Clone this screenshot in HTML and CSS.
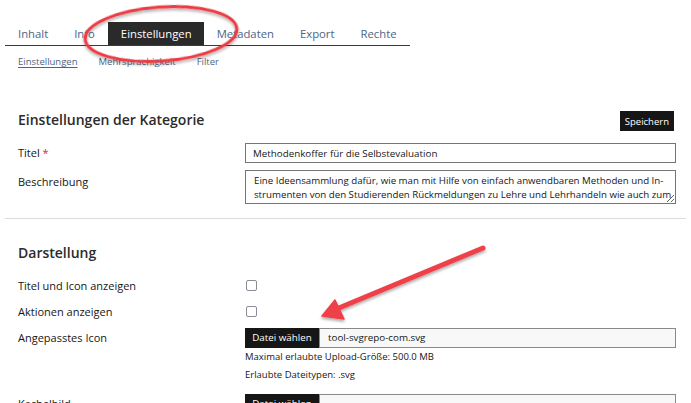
FILE: index.html
```html
<!DOCTYPE html>
<html lang="de">
<head>
<meta charset="utf-8">
<title>Einstellungen</title>
<link rel="stylesheet" href="styles.css">
</head>
<body>
<div class="page">
  <nav class="tabs">
    <a class="tab">Inhalt</a>
    <a class="tab">Info</a>
    <a class="tab active">Einstellungen</a>
    <a class="tab">Metadaten</a>
    <a class="tab">Export</a>
    <a class="tab">Rechte</a>
  </nav>
  <nav class="subtabs">
    <a class="subtab current">Einstellungen</a>
    <a class="subtab">Mehrsprachigkeit</a>
    <a class="subtab">Filter</a>
  </nav>

  <form class="form">
    <div class="section">
      <div class="section-head">
        <h2 class="heading">Einstellungen der Kategorie</h2>
        <button type="button" class="btn">Speichern</button>
      </div>
      <div class="row">
        <label class="label">Titel <span class="req">*</span></label>
        <div class="field"><input class="text" type="text" value="Methodenkoffer für die Selbstevaluation"></div>
      </div>
      <div class="row">
        <label class="label label-area">Beschreibung</label>
        <div class="field"><textarea class="area">Eine Ideensammlung dafür, wie man mit Hilfe von einfach anwendbaren Methoden und In&shy;strumenten von den Studierenden Rückmeldungen zu Lehre und Lehrhandeln wie auch zum Lernerfolg einholen kann.</textarea></div>
      </div>
    </div>

    <hr class="sep">

    <div class="section">
      <div class="section-head">
        <h2 class="heading">Darstellung</h2>
      </div>
      <div class="row row-check">
        <label class="label">Titel und Icon anzeigen</label>
        <div class="field"><input class="check" type="checkbox"></div>
      </div>
      <div class="row row-check">
        <label class="label">Aktionen anzeigen</label>
        <div class="field"><input class="check" type="checkbox"></div>
      </div>
      <div class="row">
        <label class="label">Angepasstes Icon</label>
        <div class="field">
          <div class="file"><span class="file-btn">Datei wählen</span><span class="file-name">tool-svgrepo-com.svg</span></div>
          <div class="help">Maximal erlaubte Upload-Größe: 500.0 MB</div>
          <div class="help">Erlaubte Dateitypen: .svg</div>
        </div>
      </div>
      <div class="row">
        <label class="label">Kachelbild</label>
        <div class="field">
          <div class="file"><span class="file-btn">Datei wählen</span><span class="file-name"></span></div>
        </div>
      </div>
    </div>
  </form>
</div>

<svg class="annot" width="691" height="403" viewBox="0 0 691 403">
  <defs>
    <filter id="sh" x="-20%" y="-20%" width="140%" height="160%">
      <feDropShadow dx="0" dy="2" stdDeviation="1.6" flood-color="#000" flood-opacity="0.35"/>
    </filter>
  </defs>
  <ellipse cx="161" cy="34" rx="76" ry="27" transform="rotate(-4 161 34)" fill="none" stroke="#ec3a43" stroke-width="3" filter="url(#sh)"/>
  <g filter="url(#sh)" fill="#ef4149" stroke="#ef4149">
    <line x1="483" y1="248" x2="334" y2="310" stroke-width="5" stroke-linecap="round"/>
    <polygon points="322,316 335,300 344,319" stroke-width="1.5" stroke-linejoin="round"/>
  </g>
</svg>
</body>
</html>
```

FILE: styles.css
```css
html, body {
  margin: 0;
  padding: 0;
  background: #fff;
}
body {
  position: relative;
  width: 691px;
  height: 403px;
  overflow: hidden;
  font-family: "Open Sans", "Liberation Sans", sans-serif;
  color: #161616;
}
.page {
  margin: 0 5px 0 5px;
  padding-top: 21px;
}
.tabs {
  display: inline-flex;
  border-bottom: 1px solid #3a3a3a;
}
.tab {
  display: block;
  padding: 0 13px;
  font-size: 11.3px;
  line-height: 23px;
  color: #4c6586;
  white-space: nowrap;
}
.tab.active {
  background: #2a2a2a;
  color: #fff;
  padding: 0 12px 0 13px;
}
.subtabs {
  display: flex;
  gap: 21px;
  padding-left: 13px;
  margin-top: 9px;
}
.subtab {
  font-size: 9.5px;
  line-height: 14px;
  color: #4c6586;
}
.subtab.current {
  text-decoration: underline;
  text-underline-offset: 2px;
}
.form {
  margin-top: 42px;
  padding: 0 10px 0 13px;
}
.section {
  display: flex;
  flex-direction: column;
  gap: 7px;
}
.section-head {
  display: flex;
  align-items: center;
  justify-content: space-between;
  height: 20px;
  margin-bottom: 5px;
}
.heading {
  margin: -3px 0 0 0;
  font-size: 14px;
  font-weight: 600;
  color: #2b2b2b;
}
.btn {
  margin-right: 2px;
  height: 20px;
  padding: 0 5px;
  border: 0;
  background: #161616;
  color: #fff;
  font-family: inherit;
  font-size: 9.5px;
}
.row {
  display: grid;
  grid-template-columns: 227px 1fr;
  align-items: start;
}
.label {
  font-size: 11px;
  line-height: 20px;
  color: #161616;
}
.label-area {
  padding-top: 2px;
}
.req {
  color: #d7263d;
}
.field {
  min-width: 0;
}
.text {
  box-sizing: border-box;
  display: block;
  width: 100%;
  height: 20px;
  margin: 0;
  padding: 0 7px;
  border: 1px solid #757575;
  border-radius: 0;
  font-family: inherit;
  font-size: 9.8px;
  color: #161616;
}
.area {
  box-sizing: border-box;
  display: block;
  width: 100%;
  height: 34px;
  margin: 0;
  padding: 3px 1px 0 8px;
  border: 1px solid #757575;
  border-radius: 0;
  font-family: inherit;
  font-size: 9.7px;
  line-height: 14px;
  color: #161616;
  overflow: hidden;
  resize: vertical;
  hyphens: manual;
}
.sep {
  margin: 14px -10px 25px -13px;
  border: 0;
  border-top: 1px solid #dcdcdc;
}
.row-check {
  height: 19px;
}
.row-check .label {
  line-height: 19px;
}
.row-check .field {
  display: flex;
  align-items: center;
  height: 19px;
}
.check {
  appearance: none;
  -webkit-appearance: none;
  box-sizing: border-box;
  width: 11px;
  height: 11px;
  margin: 0 0 0 1px;
  border: 1px solid #8b8b9a;
  border-radius: 2px;
  background: #fff;
}
.file {
  display: flex;
  height: 20px;
}
.file-btn {
  box-sizing: border-box;
  width: 74px;
  flex: none;
  background: #161616;
  color: #fff;
  font-size: 9.8px;
  line-height: 20px;
  text-align: center;
}
.file-name {
  box-sizing: border-box;
  flex: 1;
  border: 1px solid #8a8a8a;
  background: #f8f8f8;
  padding: 0 8px;
  font-size: 9.8px;
  line-height: 18px;
}
.help {
  font-size: 9.5px;
  line-height: 17.5px;
}
.help:last-child {
  margin-bottom: 4px;
}
.annot {
  position: absolute;
  left: 0;
  top: 0;
  pointer-events: none;
}
```
